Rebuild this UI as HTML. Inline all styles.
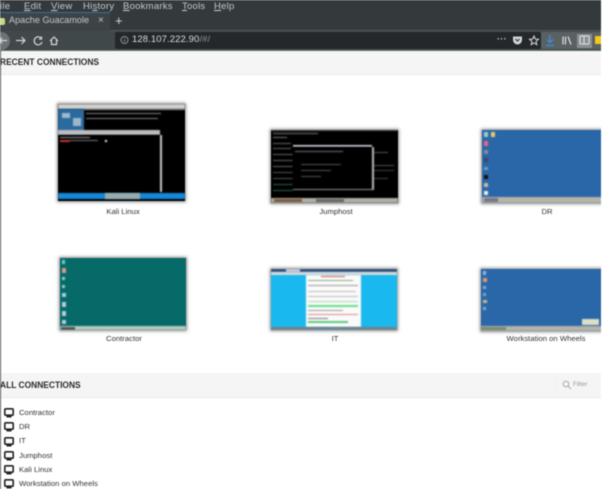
<!DOCTYPE html>
<html>
<head>
<meta charset="utf-8">
<style>
html,body{margin:0;padding:0;background:#fff}
body{width:615px;height:489px;overflow:hidden;position:relative;font-family:"Liberation Sans",sans-serif}
#w{position:absolute;left:0;top:0;width:601px;height:489px;overflow:hidden;background:#fff;filter:blur(.5px)}
.a{position:absolute}
.t{position:absolute;white-space:nowrap}
.menu{top:1px;font-size:9.5px;line-height:12px;color:#c4c8ca;letter-spacing:.25px}
.lab{position:absolute;font-size:7.7px;line-height:10px;color:#333;text-align:center;white-space:nowrap}
.th{position:absolute;overflow:hidden;box-shadow:0 0 3px 1px rgba(60,60,60,.6)}
.th div{position:absolute;filter:blur(.4px)}
.h{position:absolute;left:0;width:601px;background:#f5f5f5;border-bottom:1px solid #e8e8e8}
.ht{position:absolute;font-size:9.5px;font-weight:bold;color:#2a2a2a;white-space:nowrap;transform:scaleX(.885);transform-origin:left center}
.row{position:absolute;left:19px;font-size:7.7px;line-height:10px;color:#333;white-space:nowrap}
.ico{position:absolute;left:4px}
</style>
</head>
<body>
<div id="w">
<div class="a" style="left:0;top:0;width:601px;height:50px;background:#343a3c"></div>
<div class="t menu" style="left:0">ile</div>
<div class="t menu" style="left:24px"><u>E</u>dit</div>
<div class="t menu" style="left:51px"><u>V</u>iew</div>
<div class="t menu" style="left:83px">Hi<u>s</u>tory</div>
<div class="t menu" style="left:123px"><u>B</u>ookmarks</div>
<div class="t menu" style="left:182px"><u>T</u>ools</div>
<div class="t menu" style="left:214px"><u>H</u>elp</div>

<div class="a" style="left:0;top:30px;width:601px;height:1px;background:#50585a"></div>
<div class="a" style="left:0;top:12px;width:110px;height:19px;background:#3d4446;border-top:1px solid #3a6ea5;box-sizing:border-box"></div>
<div class="a" style="left:0;top:18px;width:5px;height:7px;background:#c8d68a;border-radius:0 2px 2px 0"></div>
<div class="t" style="left:9px;top:15px;font-size:9.5px;line-height:12px;color:#c4c8ca;transform:scaleX(.96);transform-origin:left center">Apache Guacamole</div>
<div class="t" style="left:98px;top:15px;font-size:10px;line-height:12px;color:#c4c8ca">×</div>
<div class="t" style="left:115px;top:14px;font-size:13px;line-height:14px;color:#d0d4d6">+</div>

<div class="a" style="left:0;top:31px;width:601px;height:19px;background:#41484a"></div>
<div class="a" style="left:0;top:50px;width:601px;height:1px;background:#6a7072"></div>
<div class="a" style="left:-8px;top:32px;width:18px;height:18px;border-radius:50%;background:#6d7375"></div>
<svg class="a" style="left:0;top:32px" width="70" height="18" viewBox="0 0 70 18" fill="none" stroke="#d4d8da" stroke-width="1.2">
<path d="M0 8.5H7M2 5.5L0 8.5L2 11.5"/>
<path d="M16 8.5H25M21.5 5L25 8.5L21.5 12"/>
<path d="M41 6A4 4 0 1 0 42 10M41.5 4.5V7H39"/>
<path d="M50 9L54 5L58 9M51.5 8V12.5H56.5V8"/>
</svg>
<div class="a" style="left:115px;top:32px;width:426px;height:17px;background:#24282a;border-radius:2px"></div>
<svg class="a" style="left:120px;top:35px" width="10" height="10" viewBox="0 0 10 10" fill="none" stroke="#a9aeb0" stroke-width=".8"><circle cx="4.5" cy="5" r="3.5"/><path d="M4.5 4.5V7M4.5 3V3.7"/></svg>
<div class="t" style="left:132px;top:34px;font-size:9.5px;line-height:12px;color:#d8dcde;letter-spacing:.1px">128.107.222.90<span style="color:#8a9092">/#/</span></div>
<div class="t" style="left:497px;top:33px;font-size:9px;line-height:12px;color:#c4c8ca;font-weight:bold;letter-spacing:.3px">···</div>
<svg class="a" style="left:512px;top:35px" width="40" height="11" viewBox="0 0 40 11" fill="none">
<path d="M1 1.5H10V5A4.5 4.5 0 0 1 1 5Z" fill="#d0d4d6"/><path d="M3.5 4L5.5 6L7.5 4" stroke="#24282a" stroke-width="1"/>
<path d="M22 1L23.3 4L26.5 4.3L24 6.4L24.8 9.6L22 7.9L19.2 9.6L20 6.4L17.5 4.3L20.7 4Z" stroke="#d4d8da" stroke-width="1"/>
</svg>
<div class="a" style="left:541px;top:32px;width:60px;height:17px;background:#5a6163"></div>
<svg class="a" style="left:544px;top:34px" width="57" height="14" viewBox="0 0 57 14" fill="none">
<path d="M6 1V8M3 5.5L6 8.5L9 5.5M2 11.5H10" stroke="#3f8fe0" stroke-width="1.2"/>
<path d="M19 2.5V10.5M21.5 2.5V10.5M24 2.5L27 10.5" stroke="#d4d8da" stroke-width="1.3"/>
<rect x="33" y="-1" width="15" height="15" rx="1" fill="#8a9092"/>
<rect x="36" y="2" width="9" height="8" rx="1" stroke="#e4e6e8" stroke-width="1"/><path d="M40 2V10" stroke="#e4e6e8"/>
<rect x="51" y="2" width="6" height="8" fill="#f2c81e"/>
</svg>

<div class="h" style="top:51px;height:23px"></div>
<div class="ht" style="left:0;top:57px">RECENT CONNECTIONS</div>

<div class="th" style="left:58px;top:104px;width:127px;height:97px;background:#000">
 <div style="left:0;top:0;width:127px;height:5px;background:#cfcfcf"></div>
 <div style="left:0;top:5px;width:26px;height:26px;background:#2b6a9e"></div>
 <div style="left:4px;top:9px;width:8px;height:5px;background:#9db8cc"></div>
 <div style="left:15px;top:14px;width:8px;height:8px;background:#9db8cc"></div>
 <div style="left:26px;top:5px;width:101px;height:1px;background:#999"></div>
 <div style="left:28px;top:9px;width:75px;height:1px;background:#888"></div>
 <div style="left:28px;top:14px;width:72px;height:1px;background:#888"></div>
 <div style="left:0;top:26px;width:102px;height:5px;background:#bdbdbd"></div>
 <div style="left:0;top:31px;width:102px;height:57px;background:#000;border-right:2px solid #ccc"></div>
 <div style="left:2px;top:33px;width:30px;height:1px;background:#999"></div>
 <div style="left:2px;top:36px;width:10px;height:2px;background:#c33"></div>
 <div style="left:12px;top:36px;width:28px;height:1px;background:#778"></div>
 <div style="left:47px;top:36px;width:2px;height:2px;background:#fff"></div>
 <div style="left:0;top:89px;width:127px;height:6px;background:#1588d8"></div>
 <div style="left:47px;top:89px;width:35px;height:6px;background:#9aa"></div>
</div>

<div class="th" style="left:271px;top:130px;width:127px;height:73px;background:#000">
 <div style="left:0;top:0;width:127px;height:1px;background:#666"></div>
 <div style="left:2px;top:3px;width:45px;height:1px;background:#777"></div>
 <div style="left:2px;top:7px;width:14px;height:1px;background:#777"></div>
 <div style="left:2px;top:13px;width:18px;height:1px;background:#666"></div>
 <div style="left:2px;top:18px;width:18px;height:1px;background:#666"></div>
 <div style="left:2px;top:24px;width:20px;height:1px;background:#666"></div>
 <div style="left:2px;top:30px;width:20px;height:1px;background:#666"></div>
 <div style="left:2px;top:36px;width:20px;height:1px;background:#666"></div>
 <div style="left:2px;top:42px;width:20px;height:1px;background:#555"></div>
 <div style="left:2px;top:48px;width:20px;height:1px;background:#555"></div>
 <div style="left:2px;top:54px;width:20px;height:1px;background:#265"></div>
 <div style="left:2px;top:60px;width:20px;height:1px;background:#265"></div>
 <div style="left:103px;top:22px;width:14px;height:1px;background:#555"></div>
 <div style="left:103px;top:35px;width:20px;height:1px;background:#555"></div>
 <div style="left:103px;top:40px;width:20px;height:1px;background:#444"></div>
 <div style="left:103px;top:48px;width:14px;height:1px;background:#444"></div>
 <div style="left:22px;top:15px;width:79px;height:2px;background:#c8ccd4"></div>
 <div style="left:22px;top:17px;width:79px;height:42px;background:#000;border-right:2px solid #bbb;border-bottom:1px solid #999"></div>
 <div style="left:24px;top:21px;width:48px;height:1px;background:#777"></div>
 <div style="left:30px;top:34px;width:40px;height:1px;background:#555"></div>
 <div style="left:30px;top:40px;width:30px;height:1px;background:#555"></div>
 <div style="left:30px;top:46px;width:20px;height:1px;background:#555"></div>
 <div style="left:0;top:68px;width:127px;height:5px;background:#aeaea6"></div>
 <div style="left:3px;top:69px;width:28px;height:3px;background:#7a5a3a"></div>
 <div style="left:45px;top:69px;width:28px;height:3px;background:#666"></div>
</div>

<div class="th" style="left:482px;top:130px;width:125px;height:73px;background:#2a67a8">
 <div style="left:0;top:67px;width:125px;height:6px;background:#b4b4a8"></div>
 <div style="left:2px;top:68px;width:14px;height:4px;background:#778"></div>
 <div style="left:2px;top:2px;width:4px;height:5px;background:#9cc"></div>
 <div style="left:9px;top:2px;width:4px;height:5px;background:#ec6"></div>
 <div style="left:2px;top:11px;width:4px;height:5px;background:#e8687c"></div>
 <div style="left:2px;top:20px;width:4px;height:4px;background:#8888a0"></div>
 <div style="left:2px;top:28px;width:4px;height:4px;background:#446"></div>
 <div style="left:2px;top:37px;width:4px;height:3px;background:#6a9cc0"></div>
 <div style="left:2px;top:45px;width:4px;height:4px;background:#111"></div>
 <div style="left:2px;top:53px;width:4px;height:4px;background:#cb9"></div>
 <div style="left:2px;top:61px;width:4px;height:4px;background:#eee"></div>
</div>

<div class="th" style="left:60px;top:258px;width:126px;height:72px;background:#056a68">
 <div style="left:0;top:68px;width:126px;height:4px;background:#b8c8c0"></div>
 <div style="left:1px;top:69px;width:14px;height:3px;background:#555"></div>
 <div style="left:2px;top:2px;width:3px;height:4px;background:#7cc"></div>
 <div style="left:2px;top:10px;width:4px;height:5px;background:#d98"></div>
 <div style="left:2px;top:19px;width:3px;height:3px;background:#9cc"></div>
 <div style="left:2px;top:27px;width:3px;height:3px;background:#9cc"></div>
 <div style="left:2px;top:35px;width:4px;height:4px;background:#ace"></div>
 <div style="left:2px;top:44px;width:4px;height:5px;background:#bcd"></div>
 <div style="left:2px;top:53px;width:4px;height:5px;background:#bcd"></div>
 <div style="left:2px;top:62px;width:4px;height:4px;background:#bcd"></div>
</div>

<div class="th" style="left:271px;top:269px;width:126px;height:61px;background:#19b8ee">
 <div style="left:0;top:0;width:126px;height:3px;background:#3a4a70"></div>
 <div style="left:15px;top:0;width:14px;height:3px;background:#ccd"></div>
 <div style="left:0;top:3px;width:126px;height:3px;background:#d8d8d8"></div>
 <div style="left:35px;top:6px;width:55px;height:52px;background:#fafafa"></div>
 <div style="left:50px;top:7px;width:24px;height:1px;background:#c55"></div>
 <div style="left:37px;top:11px;width:45px;height:1px;background:#8a8"></div>
 <div style="left:37px;top:16px;width:50px;height:1px;background:#999"></div>
 <div style="left:37px;top:22px;width:48px;height:1px;background:#bbb"></div>
 <div style="left:37px;top:27px;width:50px;height:1px;background:#bbb"></div>
 <div style="left:37px;top:32px;width:50px;height:1px;background:#ada"></div>
 <div style="left:37px;top:36px;width:50px;height:2px;background:#6d8"></div>
 <div style="left:37px;top:41px;width:35px;height:1px;background:#999"></div>
 <div style="left:37px;top:45px;width:50px;height:1px;background:#d88"></div>
 <div style="left:37px;top:49px;width:20px;height:1px;background:#777"></div>
 <div style="left:37px;top:52px;width:40px;height:2px;background:#5c7"></div>
 <div style="left:0;top:58px;width:126px;height:3px;background:#7a8088"></div>
</div>

<div class="th" style="left:481px;top:269px;width:125px;height:62px;background:#2a67a8">
 <div style="left:0;top:57px;width:125px;height:5px;background:#b4b4a8"></div>
 <div style="left:0;top:58px;width:25px;height:3px;background:#7a8a70"></div>
 <div style="left:101px;top:50px;width:17px;height:6px;background:#dde0c8"></div>
 <div style="left:2px;top:2px;width:3px;height:4px;background:#8bd"></div>
 <div style="left:2px;top:9px;width:4px;height:4px;background:#d97"></div>
 <div style="left:2px;top:17px;width:3px;height:3px;background:#8ac"></div>
 <div style="left:2px;top:24px;width:3px;height:3px;background:#7ac"></div>
 <div style="left:2px;top:31px;width:4px;height:3px;background:#cb8"></div>
 <div style="left:2px;top:38px;width:3px;height:3px;background:#8ac"></div>
</div>

<div class="lab" style="left:58px;width:130px;top:207px">Kali Linux</div>
<div class="lab" style="left:271px;width:130px;top:207px">Jumphost</div>
<div class="lab" style="left:482px;width:130px;top:207px">DR</div>
<div class="lab" style="left:59px;width:130px;top:334px">Contractor</div>
<div class="lab" style="left:270px;width:130px;top:334px">IT</div>
<div class="lab" style="left:481px;width:130px;top:334px">Workstation on Wheels</div>

<div class="h" style="top:373px;height:24px"></div>
<div class="ht" style="left:0;top:380px">ALL CONNECTIONS</div>
<svg class="a" style="left:562px;top:380px" width="10" height="10" viewBox="0 0 10 10" fill="none" stroke="#aaa" stroke-width="1"><circle cx="4" cy="4" r="2.8"/><path d="M6 6L9 9"/></svg>
<div class="t" style="left:573px;top:380px;font-size:6.5px;line-height:10px;color:#999">Filter</div>
<div class="a" style="left:556px;top:376px;width:1px;height:18px;background:#eee"></div>

<svg width="0" height="0" style="position:absolute"><defs><g id="m"><rect x=".8" y=".8" width="8.4" height="6.4" rx="1" fill="#fff" stroke="#222" stroke-width="1.6"/><rect x="2.5" y="7.5" width="5" height="2" fill="#222"/></g></defs></svg>
<svg class="ico" style="top:408px" width="10" height="10"><use href="#m"/></svg>
<svg class="ico" style="top:422px" width="10" height="10"><use href="#m"/></svg>
<svg class="ico" style="top:437px" width="10" height="10"><use href="#m"/></svg>
<svg class="ico" style="top:451px" width="10" height="10"><use href="#m"/></svg>
<svg class="ico" style="top:465px" width="10" height="10"><use href="#m"/></svg>
<svg class="ico" style="top:479px" width="10" height="10"><use href="#m"/></svg>
<div class="row" style="top:408px">Contractor</div>
<div class="row" style="top:422px">DR</div>
<div class="row" style="top:436px">IT</div>
<div class="row" style="top:451px">Jumphost</div>
<div class="row" style="top:465px">Kali Linux</div>
<div class="row" style="top:479px">Workstation on Wheels</div>

<div class="a" style="left:0;top:50px;width:1px;height:439px;background:#555"></div>
</div>
</body>
</html>
